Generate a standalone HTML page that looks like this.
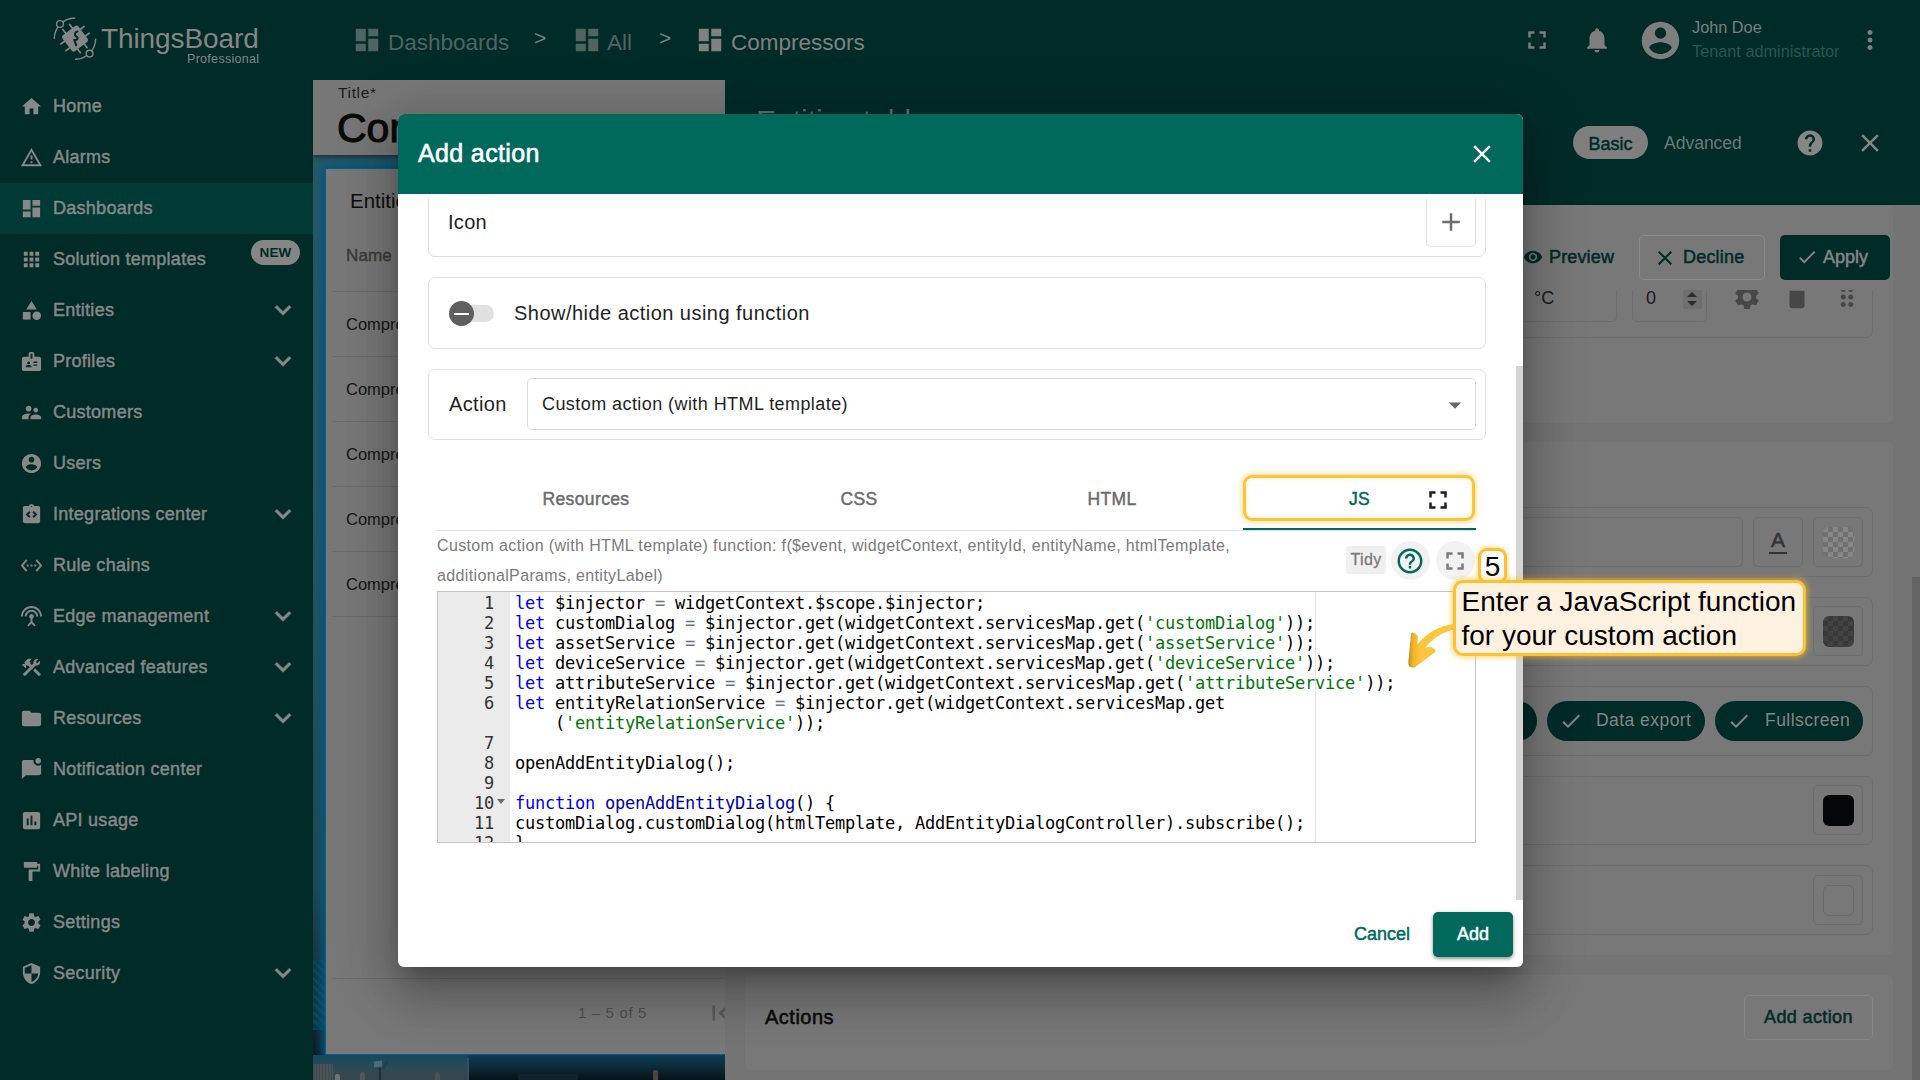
<!DOCTYPE html>
<html lang="en">
<head>
<meta charset="utf-8">
<title>ThingsBoard - Add action</title>
<style>
*{box-sizing:border-box;margin:0;padding:0}
html,body{width:1920px;height:1080px;overflow:hidden;background:#787878;font-family:"Liberation Sans",sans-serif;color:#111}
.abs{position:absolute}
svg{display:block}
/* ---------- sidebar ---------- */
#side{position:absolute;left:0;top:0;width:313px;height:1080px;background:#002b27}
#side .it{position:absolute;left:0;width:313px;height:51px}
#side .it.act{background:#003a35}
#side .it svg.ic{position:absolute;left:19.5px;top:13.5px;width:23px;height:23px;fill:#888888}
#side .it span{position:absolute;left:53px;top:15px;font-size:18px;color:#888888;-webkit-text-stroke:.45px #888888;letter-spacing:.27px;white-space:nowrap;line-height:20px}
#side .it svg.ch{position:absolute;left:267px;top:9px;width:32px;height:32px;fill:#888888;stroke:#888888;stroke-width:.5px}
#side .new{position:absolute;left:251px;top:6px;width:49px;height:25px;border-radius:13px;background:#868686;color:#002b27;font-size:13.5px;font-weight:bold;line-height:25px;text-align:center;letter-spacing:.2px}
/* ---------- topbar ---------- */
#top{position:absolute;left:313px;top:0;width:1607px;height:80px;background:#002b27}
#top .bc{position:absolute;top:30px;font-size:22.5px;color:#506461;line-height:26px;white-space:nowrap}
#top svg.bi{position:absolute;top:25px;width:30px;height:30px;fill:#506461}
#top .gt{position:absolute;top:25px;font-size:21px;color:#7a8280;line-height:26px}
/* ---------- left panel ---------- */
#left{position:absolute;left:313px;top:80px;width:412px;height:1000px;overflow:hidden;background:linear-gradient(180deg,#2b5866 0%,#2a5563 40%,#234650 80%,#16272e 93%,#0a1013 100%)}
#left .hd{position:absolute;left:0;top:0;width:412px;height:75px;background:#777;box-shadow:0 2px 5px rgba(0,0,0,.45)}
#left .wd{position:absolute;left:13px;top:89px;width:421px;height:885px;background:#787878;box-shadow:0 0 0 1px #0a5c86,0 0 9px 5px #04587f}
#left .row{position:absolute;left:19px;font-size:16.5px;color:#161616;line-height:20px}
#left .ln{position:absolute;left:5px;width:410px;height:1px;background:#6c6c6c}
/* ---------- right panel ---------- */
#right{position:absolute;left:725px;top:80px;width:1195px;height:1000px;background:#747474;overflow:hidden}
#right .hd{position:absolute;left:0;top:0;width:1195px;height:125px;background:#002b27}
#right .card{position:absolute;left:20px;width:1148px;background:#787878;border-radius:5px}
#right .box{position:absolute;border:1px solid #6e6e6e;border-radius:7px}
#right .sw{position:absolute;left:1088px;width:50px;height:50px;border:1px solid #6e6e6e;border-radius:5px}
#right .sw i{position:absolute;left:9px;top:9px;width:31px;height:31px;border-radius:6px}
/* ---------- dialog ---------- */
#dlg{position:absolute;left:398px;top:114px;width:1125px;height:853px;background:#fff;border-radius:6px;overflow:hidden}
#dlgsh{position:absolute;left:398px;top:114px;width:1125px;height:853px;border-radius:6px;box-shadow:0 14px 19px -8px rgba(0,0,0,.24),0 30px 48px 4px rgba(0,0,0,.17),0 11px 58px 10px rgba(0,0,0,.16)}
#dlg .hd{position:absolute;left:0;top:0;width:1125px;height:80px;background:#00695c}
#dlg .pn{position:absolute;left:30px;width:1058px;border:1px solid #e0e0e0;border-radius:7px}
#dlg .lb{position:absolute;font-size:19.5px;line-height:24px;color:#1f1f1f;white-space:nowrap}
#dlg .tab{position:absolute;top:375px;font-size:17.5px;line-height:20px;-webkit-text-stroke-width:.45px;color:#6b6b6b;letter-spacing:.37px;white-space:nowrap;transform:translateX(-50%)}
#ed{position:absolute;left:39px;top:477px;width:1039px;height:252px;border:1px solid #c4c4c4;overflow:hidden;background:#fff}
#ed .gut{position:absolute;left:0;top:0;width:72px;height:252px;background:#ebebeb}
#ed .pm{position:absolute;left:877px;top:0;width:1px;height:252px;background:#e3e3e3}
#ed pre{position:absolute;top:1px;font-family:"DejaVu Sans Mono","Liberation Mono",monospace;font-size:17px;letter-spacing:-.234px;line-height:20px;color:#000;white-space:pre}
#ed pre.num{left:0;width:56px;text-align:right;color:#333}
#ed pre.code{left:77px}
#ed .k{color:#0000f0}#ed .o{color:#687687}#ed .s{color:#03740a}#ed .f{color:#0000a2}
</style>
</head>
<body>
<!-- ================= SIDEBAR ================= -->
<div id="side">
  <div id="logo" class="abs" style="left:50px;top:14px;width:220px;height:56px">
    <svg class="abs" style="left:-10px;top:-6px" width="70" height="64" viewBox="0 0 70 64" fill="none" stroke="#868686" stroke-width="1.4" stroke-linecap="round">
      <path d="M14.3 30.6A20.7 20.7 0 0 1 34.6 10"/><path d="M55.6 31.2A20.7 20.7 0 0 1 35.6 51.3"/>
      <circle cx="20" cy="16" r="3.4" fill="#002b27"/><circle cx="49.6" cy="45.6" r="3.4" fill="#002b27"/>
      <g transform="translate(35 30.6) rotate(-37)">
        <g stroke-width="1.7"><path d="M-4.2 -14.5V14.5M4.2 -14.5V14.5M-14.5 -4.2H14.5M-14.5 4.2H14.5"/></g>
        <rect x="-10" y="-10" width="20" height="20" rx="2.8" fill="#868686" stroke="none"/>
      </g>
      <path d="M37.5 23.5c-3 .6-3.4 3.4-1.2 4.8 2.4 1.6 1 4.2-2.2 3.6m.3.2l1.8 5.2" stroke="#002b27" stroke-width="2"/>
    </svg>
    <div class="abs" style="left:51px;top:9px;font-size:28px;line-height:32px;color:#868686;letter-spacing:-.1px;white-space:nowrap">ThingsBoard</div>
    <div class="abs" style="left:137px;top:38px;font-size:12.5px;line-height:14px;color:#868686;letter-spacing:.3px;white-space:nowrap">Professional</div>
  </div>
  <div class="it" style="top:81px"><svg class="ic" viewBox="0 0 24 24"><path d="M10 20v-6h4v6h5v-8h3L12 3 2 12h3v8z"/></svg><span>Home</span></div>
  <div class="it" style="top:132px"><svg class="ic" viewBox="0 0 24 24"><path d="M12 5.99L19.53 19H4.47L12 5.99M12 2L1 21h22L12 2zm1 14h-2v2h2v-2zm0-6h-2v4h2v-4z"/></svg><span>Alarms</span></div>
  <div class="it act" style="top:183px"><svg class="ic" viewBox="0 0 24 24"><path d="M3 13h8V3H3v10zm0 8h8v-6H3v6zm10 0h8V11h-8v10zm0-18v6h8V3h-8z"/></svg><span>Dashboards</span></div>
  <div class="it" style="top:234px"><svg class="ic" viewBox="0 0 24 24"><path d="M4 8h4V4H4v4zm6 12h4v-4h-4v4zm-6 0h4v-4H4v4zm0-6h4v-4H4v4zm6 0h4v-4h-4v4zm6-10v4h4V4h-4zm-6 4h4V4h-4v4zm6 6h4v-4h-4v4zm0 6h4v-4h-4v4z"/></svg><span>Solution templates</span><b class="new">NEW</b></div>
  <div class="it" style="top:285px"><svg class="ic" viewBox="0 0 24 24"><path d="M12 2l-5.5 9h11z"/><circle cx="17.5" cy="17.5" r="4.5"/><path d="M3 13.5h8v8H3z"/></svg><span>Entities</span><svg class="ch" viewBox="0 0 24 24"><path d="M16.59 8.59L12 13.17 7.41 8.59 6 10l6 6 6-6z"/></svg></div>
  <div class="it" style="top:336px"><svg class="ic" viewBox="0 0 24 24"><path d="M20 7h-5V4c0-1.1-.9-2-2-2h-2c-1.1 0-2 .9-2 2v3H4c-1.1 0-2 .9-2 2v11c0 1.1.9 2 2 2h16c1.1 0 2-.9 2-2V9c0-1.1-.9-2-2-2zM9 12c.83 0 1.5.67 1.5 1.5S9.83 15 9 15s-1.5-.67-1.5-1.5S8.17 12 9 12zm3 6H6v-.75c0-1 2-1.5 3-1.5s3 .5 3 1.5V18zm1-9h-2V4h2v5zm5 7.5h-4V15h4v1.5zm0-3h-4V12h4v1.5z"/></svg><span>Profiles</span><svg class="ch" viewBox="0 0 24 24"><path d="M16.59 8.59L12 13.17 7.41 8.59 6 10l6 6 6-6z"/></svg></div>
  <div class="it" style="top:387px"><svg class="ic" viewBox="0 0 24 24"><path d="M16.5 12c1.38 0 2.49-1.12 2.49-2.5S17.88 7 16.5 7C15.12 7 14 8.12 14 9.5s1.12 2.5 2.5 2.5zM9 11c1.66 0 2.99-1.34 2.99-3S10.66 5 9 5C7.34 5 6 6.34 6 8s1.34 3 3 3zm7.5 3c-1.83 0-5.5.92-5.5 2.75V19h11v-2.25c0-1.83-3.67-2.75-5.5-2.75zM9 13c-2.33 0-7 1.17-7 3.5V19h7v-2.25c0-.85.33-2.34 2.37-3.47C10.5 13.1 9.66 13 9 13z"/></svg><span>Customers</span></div>
  <div class="it" style="top:438px"><svg class="ic" viewBox="0 0 24 24"><path d="M12 2C6.48 2 2 6.48 2 12s4.48 10 10 10 10-4.48 10-10S17.52 2 12 2zm0 3c1.66 0 3 1.34 3 3s-1.34 3-3 3-3-1.34-3-3 1.34-3 3-3zm0 14.2c-2.5 0-4.71-1.28-6-3.22.03-1.99 4-3.08 6-3.08 1.99 0 5.97 1.09 6 3.08-1.29 1.94-3.5 3.22-6 3.22z"/></svg><span>Users</span></div>
  <div class="it" style="top:489px"><svg class="ic" viewBox="0 0 24 24"><path d="M19 3h-4.18C14.4 1.84 13.3 1 12 1s-2.4.84-2.82 2H5c-.14 0-.27.01-.4.04-.39.08-.74.28-1.01.55-.18.18-.33.4-.43.64-.1.23-.16.49-.16.77v14c0 .27.06.54.16.78s.25.45.43.64c.27.27.62.47 1.01.55.13.02.26.03.4.03h14c1.1 0 2-.9 2-2V5c0-1.1-.9-2-2-2zm-8 11.17l-1.41 1.42L6 12l3.59-3.59L11 9.83 8.83 12 11 14.17zm1-9.92c-.41 0-.75-.34-.75-.75s.34-.75.75-.75.75.34.75.75-.34.75-.75.75zm2.41 11.34L13 14.17 15.17 12 13 9.83l1.41-1.42L18 12l-3.59 3.59z"/></svg><span>Integrations center</span><svg class="ch" viewBox="0 0 24 24"><path d="M16.59 8.59L12 13.17 7.41 8.59 6 10l6 6 6-6z"/></svg></div>
  <div class="it" style="top:540px"><svg class="ic" viewBox="0 0 24 24"><path d="M7.77 6.76L6.23 5.48.82 12l5.41 6.52 1.54-1.28L3.42 12l4.35-5.24zM7 13h2v-2H7v2zm10-2h-2v2h2v-2zm-6 2h2v-2h-2v2zm6.77-7.52l-1.54 1.28L20.58 12l-4.35 5.24 1.54 1.28L23.18 12l-5.41-6.52z"/></svg><span>Rule chains</span></div>
  <div class="it" style="top:591px"><svg class="ic" viewBox="0 0 24 24"><path d="M12 5c-3.87 0-7 3.13-7 7h2c0-2.76 2.24-5 5-5s5 2.24 5 5h2c0-3.87-3.13-7-7-7zm1 9.29c.88-.39 1.5-1.26 1.5-2.29 0-1.38-1.12-2.5-2.5-2.5S9.5 10.620 9.5 12c0 1.020.62 1.9 1.5 2.29v3.3L7.59 21 9 22.410l3-3 3 3L16.410 21 13 17.590v-3.3zM12 1C5.93 1 1 5.930 1 12h2c0-4.970 4.030-9 9-9s9 4.030 9 9h2c0-6.070-4.930-11-11-11z"/></svg><span>Edge management</span><svg class="ch" viewBox="0 0 24 24"><path d="M16.59 8.59L12 13.17 7.41 8.59 6 10l6 6 6-6z"/></svg></div>
  <div class="it" style="top:642px"><svg class="ic" viewBox="0 0 24 24"><path d="M13.783 15.172l2.121-2.121 5.996 5.996-2.121 2.121zM17.5 10c1.930 0 3.5-1.570 3.5-3.5 0-.580-.160-1.120-.410-1.600l-2.700 2.700-1.490-1.490 2.700-2.700c-.480-.250-1.020-.410-1.600-.410C15.570 3 14 4.570 14 6.500c0 .410.080.8.210 1.160l-1.850 1.850-1.780-1.780.710-.710-1.410-1.410L12 3.490c-1.170-1.170-3.070-1.170-4.240 0L4.220 7.030l1.410 1.410H2.810l-.710.710 3.540 3.540.710-.710V9.150l1.410 1.410.710-.710 1.780 1.780-7.410 7.410 2.120 2.120L16.340 9.790c.360.130.750.210 1.160.210z"/></svg><span>Advanced features</span><svg class="ch" viewBox="0 0 24 24"><path d="M16.59 8.59L12 13.17 7.41 8.59 6 10l6 6 6-6z"/></svg></div>
  <div class="it" style="top:693px"><svg class="ic" viewBox="0 0 24 24"><path d="M10 4H4c-1.1 0-1.99.9-1.99 2L2 18c0 1.1.9 2 2 2h16c1.1 0 2-.9 2-2V8c0-1.1-.9-2-2-2h-8l-2-2z"/></svg><span>Resources</span><svg class="ch" viewBox="0 0 24 24"><path d="M16.59 8.59L12 13.17 7.41 8.59 6 10l6 6 6-6z"/></svg></div>
  <div class="it" style="top:744px"><svg class="ic" viewBox="0 0 24 24"><path d="M22 6.98V16c0 1.1-.9 2-2 2H6l-4 4V4c0-1.1.9-2 2-2h10.1c-.06.32-.1.66-.1 1 0 2.76 2.24 5 5 5 1.13 0 2.16-.39 3-1.020zM16 3c0 1.660 1.340 3 3 3s3-1.340 3-3-1.340-3-3-3-3 1.340-3 3z"/></svg><span>Notification center</span></div>
  <div class="it" style="top:795px"><svg class="ic" viewBox="0 0 24 24"><path d="M19 3H5c-1.1 0-2 .9-2 2v14c0 1.1.9 2 2 2h14c1.1 0 2-.9 2-2V5c0-1.1-.9-2-2-2zM9 17H7v-7h2v7zm4 0h-2V7h2v10zm4 0h-2v-4h2v4z"/></svg><span>API usage</span></div>
  <div class="it" style="top:846px"><svg class="ic" viewBox="0 0 24 24"><path d="M18 4V3c0-.55-.45-1-1-1H5c-.55 0-1 .45-1 1v4c0 .55.45 1 1 1h12c.55 0 1-.45 1-1V6h1v4H9v11c0 .55.45 1 1 1h2c.55 0 1-.45 1-1v-9h8V4h-3z"/></svg><span>White labeling</span></div>
  <div class="it" style="top:897px"><svg class="ic" viewBox="0 0 24 24"><path d="M19.14 12.94c.04-.3.06-.61.06-.94 0-.32-.02-.64-.07-.94l2.03-1.58c.18-.14.23-.41.12-.61l-1.92-3.32c-.12-.22-.37-.29-.59-.22l-2.39.96c-.5-.38-1.03-.7-1.62-.94l-.36-2.54c-.04-.24-.24-.41-.48-.41h-3.84c-.24 0-.43.17-.47.41l-.36 2.54c-.59.24-1.13.57-1.62.94l-2.39-.96c-.22-.08-.47 0-.59.22L2.74 8.87c-.12.21-.08.47.12.61l2.03 1.58c-.05.3-.09.63-.09.94s.02.64.07.94l-2.03 1.58c-.18.14-.23.41-.12.61l1.920 3.32c.12.22.37.29.59.22l2.39-.96c.5.38 1.03.7 1.62.94l.36 2.54c.05.24.24.41.48.41h3.84c.24 0 .44-.17.47-.41l.36-2.54c.59-.24 1.13-.56 1.62-.94l2.39.96c.22.08.47 0 .59-.22l1.92-3.32c.12-.22.07-.47-.12-.61l-2.01-1.58zM12 15.6c-1.98 0-3.6-1.62-3.6-3.6s1.62-3.6 3.6-3.6 3.6 1.62 3.6 3.6-1.62 3.6-3.6 3.6z"/></svg><span>Settings</span></div>
  <div class="it" style="top:948px"><svg class="ic" viewBox="0 0 24 24"><path d="M12 1L3 5v6c0 5.55 3.84 10.74 9 12 5.16-1.26 9-6.45 9-12V5l-9-4zm0 10.99h7c-.53 4.12-3.28 7.79-7 8.940V12H5V6.3l7-3.110v8.8z"/></svg><span>Security</span><svg class="ch" viewBox="0 0 24 24"><path d="M16.59 8.59L12 13.17 7.41 8.59 6 10l6 6 6-6z"/></svg></div>
</div>
<!-- ================= TOPBAR ================= -->
<div id="top">
  <svg class="bi" style="left:39px" viewBox="0 0 24 24"><path d="M3 13h8V3H3v10zm0 8h8v-6H3v6zm10 0h8V11h-8v10zm0-18v6h8V3h-8z"/></svg><div class="bc" style="left:75px">Dashboards</div>
  <div class="gt" style="left:221px">&gt;</div>
  <svg class="bi" style="left:259px" viewBox="0 0 24 24"><path d="M3 13h8V3H3v10zm0 8h8v-6H3v6zm10 0h8V11h-8v10zm0-18v6h8V3h-8z"/></svg><div class="bc" style="left:294px">All</div>
  <div class="gt" style="left:346px">&gt;</div>
  <svg class="bi" style="left:382px;fill:#808080" viewBox="0 0 24 24"><path d="M3 13h8V3H3v10zm0 8h8v-6H3v6zm10 0h8V11h-8v10zm0-18v6h8V3h-8z"/></svg><div class="bc" style="left:418px;color:#808080">Compressors</div>
  <svg class="abs" style="left:1209px;top:25px;fill:#7e7e7e" width="30" height="30" viewBox="0 0 24 24"><path d="M7 14H5v5h5v-2H7v-3zm-2-4h2V7h3V5H5v5zm12 7h-3v2h5v-5h-2v3zM14 5v2h3v3h2V5h-5z"/></svg>
  <svg class="abs" style="left:1269px;top:25px;fill:#7e7e7e" width="30" height="30" viewBox="0 0 24 24"><path d="M12 22c1.1 0 2-.9 2-2h-4c0 1.1.89 2 2 2zm6-6v-5c0-3.07-1.64-5.64-4.5-6.32V4c0-.83-.67-1.5-1.5-1.5s-1.5.67-1.5 1.5v.68C7.63 5.36 6 7.92 6 11v5l-2 2v1h16v-1l-2-2z"/></svg>
  <svg class="abs" style="left:1324.5px;top:17.5px;fill:#7e7e7e" width="45" height="45" viewBox="0 0 24 24"><path d="M12 2C6.48 2 2 6.48 2 12s4.48 10 10 10 10-4.48 10-10S17.52 2 12 2zm0 3c1.66 0 3 1.34 3 3s-1.34 3-3 3-3-1.34-3-3 1.34-3 3-3zm0 14.2c-2.5 0-4.71-1.28-6-3.22.03-1.99 4-3.08 6-3.08 1.99 0 5.97 1.09 6 3.08-1.29 1.94-3.5 3.22-6 3.22z"/></svg>
  <div class="abs" style="left:1379px;top:17px;font-size:16.3px;line-height:20px;color:#7e7e7e;white-space:nowrap">John Doe</div>
  <div class="abs" style="left:1379px;top:41px;font-size:16.3px;line-height:20px;color:#2c554f;white-space:nowrap">Tenant administrator</div>
  <svg class="abs" style="left:1542px;top:25px;fill:#7e7e7e" width="30" height="30" viewBox="0 0 24 24"><path d="M12 8c1.1 0 2-.9 2-2s-.9-2-2-2-2 .9-2 2 .9 2 2 2zm0 2c-1.1 0-2 .9-2 2s.9 2 2 2 2-.9 2-2-.9-2-2-2zm0 6c-1.1 0-2 .9-2 2s.9 2 2 2 2-.9 2-2-.9-2-2-2z"/></svg>
</div>
<!-- ================= LEFT PANEL ================= -->
<div id="left">
  <div class="abs" style="left:0;top:0;z-index:2">
  <div class="abs" style="left:0;top:975px;width:155px;height:25px;background:linear-gradient(180deg,#14485c 0,#1d4a5a 25%,#2c4a54 55%,#3a4549 100%)"></div>
  <div class="abs" style="left:155px;top:975px;width:257px;height:25px;background:linear-gradient(180deg,#0d3d54 0,#0c2c3c 45%,#081217 100%)"></div>
  <div class="abs" style="left:154px;top:978px;width:2px;height:22px;background:#35505c"></div>
  <div class="abs" style="left:0;top:984px;width:20px;height:16px;background:repeating-linear-gradient(90deg,#3f474a 0 1px,#4b5356 1px 3px)"></div>
  <div class="abs" style="left:22px;top:994px;width:5px;height:6px;border-radius:2px 2px 0 0;background:#6e7274"></div>
  <div class="abs" style="left:47px;top:992px;width:5px;height:8px;border-radius:2px 2px 0 0;background:#50565a"></div>
  <div class="abs" style="left:61px;top:981px;width:8px;height:6px;background:#4d6a78;transform:skewY(-8deg)"></div>
  <div class="abs" style="left:71px;top:981px;width:2px;height:9px;background:#2a3a44;transform:rotate(28deg)"></div>
  <div class="abs" style="left:66px;top:988px;width:2px;height:12px;background:#1f2c33"></div>
  <div class="abs" style="left:122px;top:992px;width:5px;height:8px;border-radius:2px 2px 0 0;background:#4b5256"></div>
  <div class="abs" style="left:340px;top:990px;width:5px;height:10px;border-radius:2px 2px 0 0;background:#4d4342"></div>
  <div class="abs" style="left:205px;top:994px;width:60px;height:6px;background:#12232c"></div>
  </div>
  <div class="abs" style="left:0;top:880px;width:14px;height:70px;background:repeating-linear-gradient(45deg,#16414f 0 2px,#0d3546 2px 6px)"></div>
  <div class="wd"><div class="abs" style="left:1px;top:-1px;width:100%;height:100%">
    <div class="abs" style="left:23px;top:21px;font-size:20.5px;line-height:24px;color:#0d0d0d;white-space:nowrap">Entities table</div>
    <div class="row" style="top:78px;color:#3d3b36;-webkit-text-stroke-width:.45px;font-size:17px;letter-spacing:.15px">Name</div>
    <div class="ln" style="top:123px"></div>
    <div class="row" style="top:146px">Compressor A</div><div class="ln" style="top:188px"></div>
    <div class="row" style="top:211px">Compressor B</div><div class="ln" style="top:253px"></div>
    <div class="row" style="top:276px">Compressor C</div><div class="ln" style="top:318px"></div>
    <div class="row" style="top:341px">Compressor D</div><div class="ln" style="top:383px"></div>
    <div class="row" style="top:406px">Compressor E</div><div class="ln" style="top:448px"></div>
    <div class="ln" style="top:810px"></div>
    <div class="abs" style="left:251px;top:836px;font-size:15px;line-height:18px;color:#4f4f4f;white-space:nowrap;letter-spacing:.65px">1 – 5 of 5</div>
    <svg class="abs" style="left:378px;top:830px;fill:#5a5a5a" width="30" height="30" viewBox="0 0 24 24"><path d="M18.41 16.59L13.82 12l4.59-4.59L17 6l-6 6 6 6zM6 6h2v12H6z"/></svg>
  </div></div>
  <div class="hd">
    <div class="abs" style="left:25px;top:5px;font-size:15.5px;line-height:16px;color:#1c1c1c;letter-spacing:.65px">Title*</div>
    <div class="abs" style="left:24px;top:25px;font-size:41px;line-height:46px;-webkit-text-stroke-width:1.1px;color:#0a0a0a;white-space:nowrap">Compressors</div>
  </div>
</div>
<!-- ================= RIGHT PANEL ================= -->
<div id="right">
  <!-- cards -->
  <div class="card" style="top:125px;height:218px"></div>
  <div class="card" style="top:362px;height:513px"></div>
  <div class="card" style="top:895px;height:95px"></div>
  <!-- row: units / decimals -->
  <div class="box" style="left:-40px;top:170px;width:1188px;height:88px;border-top-color:transparent"></div>
  <div class="box" style="left:600px;top:190px;width:292px;height:52px;border-radius:5px"></div>
  <div class="abs" style="left:809px;top:208px;font-size:18px;line-height:20px;color:#1a1a1a">°C</div>
  <div class="box" style="left:907px;top:190px;width:75px;height:52px;border-radius:5px"></div>
  <div class="abs" style="left:921px;top:208px;font-size:18px;line-height:20px;color:#1a1a1a">0</div>
  <div class="abs" style="left:958px;top:209px;width:19px;height:20px;background:#6f6f6f"></div>
  <svg class="abs" style="left:960px;top:210px;fill:#2b2b2b" width="14" height="18" viewBox="0 0 14 18"><path d="M2 7l5-5 5 5zM2 11l5 5 5-5z"/></svg>
  <svg class="abs" style="left:1007px;top:202px;fill:#474747" width="30" height="30" viewBox="0 0 24 24"><path d="M19.14 12.94c.04-.3.06-.61.06-.94 0-.32-.02-.64-.07-.94l2.03-1.58c.18-.14.23-.41.12-.61l-1.92-3.32c-.12-.22-.37-.29-.59-.22l-2.39.96c-.5-.38-1.03-.7-1.62-.94l-.36-2.54c-.04-.24-.24-.41-.48-.41h-3.84c-.24 0-.43.17-.47.41l-.36 2.54c-.59.24-1.13.57-1.62.94l-2.39-.96c-.22-.08-.47 0-.59.22L2.74 8.87c-.12.21-.08.47.12.61l2.03 1.58c-.05.3-.09.63-.09.94s.02.64.07.94l-2.03 1.58c-.18.14-.23.41-.12.61l1.92 3.32c.12.22.37.29.59.22l2.39-.96c.5.38 1.03.7 1.62.94l.36 2.54c.05.24.24.41.48.41h3.84c.24 0 .44-.17.47-.41l.36-2.54c.59-.24 1.13-.56 1.62-.94l2.39.96c.22.08.47 0 .59-.22l1.92-3.32c.12-.22.07-.47-.12-.61l-2.01-1.58zM12 15.6c-1.98 0-3.6-1.62-3.6-3.6s1.62-3.6 3.6-3.6 3.6 1.62 3.6 3.6-1.62 3.6-3.6 3.6z"/></svg>
  <svg class="abs" style="left:1057px;top:202px;fill:#474747" width="30" height="30" viewBox="0 0 24 24"><path d="M6 19c0 1.1.9 2 2 2h8c1.1 0 2-.9 2-2V7H6v12zM19 4h-3.5l-1-1h-5l-1 1H5v2h14V4z"/></svg>
  <svg class="abs" style="left:1107px;top:202px;fill:#474747" width="30" height="30" viewBox="0 0 24 24"><path d="M11 18c0 1.1-.9 2-2 2s-2-.9-2-2 .9-2 2-2 2 .9 2 2zm-2-8c-1.1 0-2 .9-2 2s.9 2 2 2 2-.9 2-2-.9-2-2-2zm0-6c-1.1 0-2 .9-2 2s.9 2 2 2 2-.9 2-2-.9-2-2-2zm6 4c1.1 0 2-.9 2-2s-.9-2-2-2-2 .9-2 2 .9 2 2 2zm0 2c-1.1 0-2 .9-2 2s.9 2 2 2 2-.9 2-2-.9-2-2-2zm0 6c-1.1 0-2 .9-2 2s.9 2 2 2 2-.9 2-2-.9-2-2-2z"/></svg>
  <!-- sticky button strip (covers clipped row tops) -->
  <div class="abs" style="left:20px;top:125px;width:1148px;height:85px;background:#787878;border-radius:5px 5px 0 0"></div>
  <svg class="abs" style="left:797.5px;top:167px;fill:#002b27" width="20" height="20" viewBox="0 0 24 24"><path d="M12 4.5C7 4.5 2.73 7.61 1 12c1.73 4.39 6 7.5 11 7.5s9.27-3.11 11-7.5c-1.73-4.39-6-7.5-11-7.5zM12 17c-2.76 0-5-2.24-5-5s2.24-5 5-5 5 2.24 5 5-2.24 5-5 5zm0-8c-1.66 0-3 1.34-3 3s1.34 3 3 3 3-1.34 3-3-1.34-3-3-3z"/></svg>
  <div class="abs" style="left:824px;top:166px;font-size:18px;line-height:22px;-webkit-text-stroke-width:.5px;letter-spacing:.15px;color:#002b27">Preview</div>
  <div class="box" style="left:914px;top:155px;width:126px;height:45px;border-radius:5px;border-color:#8a8a8a"></div>
  <svg class="abs" style="left:928px;top:165.5px;fill:#002b27" width="24" height="24" viewBox="0 0 24 24"><path d="M19 6.41L17.59 5 12 10.59 6.410 5 5 6.410 10.590 12 5 17.590 6.410 19 12 13.410 17.590 19 19 17.590 13.410 12z"/></svg>
  <div class="abs" style="left:958px;top:166px;font-size:18px;line-height:22px;-webkit-text-stroke-width:.5px;letter-spacing:.2px;color:#002b27">Decline</div>
  <div class="abs" style="left:1055px;top:155px;width:110px;height:45px;border-radius:5px;background:#002b27"></div>
  <svg class="abs" style="left:1071px;top:166px;fill:#868686" width="22" height="22" viewBox="0 0 24 24"><path d="M9 16.17L4.83 12l-1.42 1.41L9 19 21 7l-1.41-1.41z"/></svg>
  <div class="abs" style="left:1098px;top:166px;font-size:18px;line-height:22px;-webkit-text-stroke-width:.5px;color:#868686">Apply</div>
  <!-- card 2 rows -->
  <div class="box" style="left:-40px;top:427px;width:1188px;height:70px"></div>
  <div class="box" style="left:300px;top:437px;width:718px;height:50px;border-radius:5px"></div>
  <div class="box" style="left:1028px;top:437px;width:50px;height:50px;border-radius:5px"></div>
  <div class="abs" style="left:1028px;top:447px;width:50px;text-align:center;font-size:21px;line-height:26px;color:#333;-webkit-text-stroke:.5px #333">A</div>
  <div class="abs" style="left:1044px;top:472px;width:18px;height:2px;background:#333"></div>
  <div class="sw" style="top:437px"><i style="background:repeating-conic-gradient(#707070 0% 25%,#868686 0% 50%) 0 0/10px 10px"></i></div>
  <div class="box" style="left:-40px;top:517px;width:1188px;height:69px"></div>
  <div class="sw" style="top:526px"><i style="background:repeating-conic-gradient(#383838 0% 25%,#424242 0% 50%) 0 0/10px 10px"></i></div>
  <div class="box" style="left:-40px;top:606px;width:1188px;height:70px"></div>
  <div class="abs" style="left:700px;top:621px;width:112px;height:40px;border-radius:20px;background:#002b27"></div>
  <div class="abs" style="left:822px;top:621px;width:158px;height:40px;border-radius:20px;background:#002b27"></div>
  <svg class="abs" style="left:834px;top:629px;fill:#868686" width="24" height="24" viewBox="0 0 24 24"><path d="M9 16.17L4.83 12l-1.42 1.41L9 19 21 7l-1.41-1.41z"/></svg>
  <div class="abs" style="left:871px;top:629px;font-size:17.5px;line-height:22px;color:#868686;white-space:nowrap;letter-spacing:.45px">Data export</div>
  <div class="abs" style="left:990px;top:621px;width:148px;height:40px;border-radius:20px;background:#002b27"></div>
  <svg class="abs" style="left:1002px;top:629px;fill:#868686" width="24" height="24" viewBox="0 0 24 24"><path d="M9 16.17L4.83 12l-1.42 1.41L9 19 21 7l-1.41-1.41z"/></svg>
  <div class="abs" style="left:1040px;top:629px;font-size:17.5px;line-height:22px;color:#868686;white-space:nowrap;letter-spacing:.45px">Fullscreen</div>
  <div class="box" style="left:-40px;top:696px;width:1188px;height:69px"></div>
  <div class="sw" style="top:705px"><i style="background:#050607"></i></div>
  <div class="box" style="left:-40px;top:785px;width:1188px;height:70px"></div>
  <div class="sw" style="top:795px"><i style="background:#787878;border:1px solid #6a6a6a"></i></div>
  <!-- actions -->
  <div class="abs" style="left:40px;top:925px;font-size:20px;line-height:24px;-webkit-text-stroke-width:.55px;letter-spacing:.5px;color:#0b0b0b">Actions</div>
  <div class="box" style="left:1019px;top:915px;width:129px;height:45px;border-radius:5px;border-color:#858585"></div>
  <div class="abs" style="left:1019px;top:926px;width:129px;text-align:center;font-size:18px;line-height:22px;-webkit-text-stroke-width:.5px;letter-spacing:.37px;color:#002b27">Add action</div>
  <!-- scrollbar -->
  <div class="abs" style="left:1187px;top:497px;width:8px;height:503px;background:#646464"></div>
  <!-- header -->
  <div class="hd">
    <div class="abs" style="left:31px;top:23px;font-size:30px;line-height:36px;color:#5f6d6b;white-space:nowrap">Entities table</div>
    <div class="abs" style="left:848px;top:46px;width:75px;height:33px;border-radius:17px;background:#7f7f7f;color:#002b27;font-size:18px;-webkit-text-stroke-width:.5px;line-height:36px;text-align:center">Basic</div>
    <div class="abs" style="left:939px;top:52px;font-size:17.5px;line-height:22px;color:#6b7b79">Advanced</div>
    <svg class="abs" style="left:1070px;top:48px;fill:#868686" width="30" height="30" viewBox="0 0 24 24"><path d="M12 2C6.48 2 2 6.48 2 12s4.48 10 10 10 10-4.48 10-10S17.52 2 12 2zm1 17h-2v-2h2v2zm2.07-7.75l-.9.92C13.45 12.9 13 13.5 13 15h-2v-.5c0-1.1.45-2.1 1.17-2.83l1.24-1.26c.37-.36.59-.86.59-1.41 0-1.1-.9-2-2-2s-2 .9-2 2H8c0-2.21 1.79-4 4-4s4 1.79 4 4c0 .88-.36 1.68-.93 2.25z"/></svg>
    <svg class="abs" style="left:1130px;top:48px;fill:#868686" width="30" height="30" viewBox="0 0 24 24"><path d="M19 6.41L17.59 5 12 10.59 6.41 5 5 6.41 10.59 12 5 17.59 6.41 19 12 13.41 17.59 19 19 17.59 13.41 12z"/></svg>
  </div>
</div>
<!-- ================= DIALOG ================= -->
<div id="dlgsh"></div>
<div id="dlg">
  <!-- icon panel (clipped under header) -->
  <div class="pn" style="top:62px;height:81px"></div>
  <div class="lb" style="left:50px;top:96px;font-size:20px;letter-spacing:.3px">Icon</div>
  <div class="abs" style="left:1028px;top:74px;width:50px;height:59px;border:1px solid #e0e0e0;border-radius:5px"></div>
  <svg class="abs" style="left:1038px;top:93px;fill:#6e6e6e" width="30" height="30" viewBox="0 0 24 24"><path d="M19 13h-6v6h-2v-6H5v-2h6V5h2v6h6v2z"/></svg>
  <div class="abs" style="left:0;top:80px;width:1118px;height:5px;background:#fff"></div>
  <!-- show/hide panel -->
  <div class="pn" style="top:163px;height:72px"></div>
  <div class="abs" style="left:52px;top:191px;width:44px;height:17px;border-radius:9px;background:#e0e0e0"></div>
  <div class="abs" style="left:51px;top:187px;width:25px;height:25px;border-radius:50%;background:#5f5f5f"></div>
  <div class="abs" style="left:56px;top:198.5px;width:15px;height:2px;background:#fff"></div>
  <div class="lb" style="left:116px;top:187px;font-size:20px;letter-spacing:.47px">Show/hide action using function</div>
  <!-- action panel -->
  <div class="pn" style="top:255px;height:71px"></div>
  <div class="lb" style="left:51px;top:278px;font-size:20px;letter-spacing:.35px">Action</div>
  <div class="abs" style="left:129px;top:264px;width:949px;height:52px;border:1px solid #dcdcdc;border-radius:5px"></div>
  <div class="abs" style="left:144px;top:279px;font-size:18px;line-height:22px;color:#1f1f1f;white-space:nowrap;letter-spacing:.43px">Custom action (with HTML template)</div>
  <svg class="abs" style="left:1042px;top:276px;fill:#666" width="30" height="30" viewBox="0 0 24 24"><path d="M7 10l5 5 5-5z"/></svg>
  <!-- tabs -->
  <div class="tab" style="left:188px">Resources</div>
  <div class="tab" style="left:461px">CSS</div>
  <div class="tab" style="left:714px">HTML</div>
  <div class="tab" style="left:961.5px;color:#00695c">JS</div>
  <svg class="abs" style="left:1025px;top:371px;fill:#1c1c1c" width="30" height="30" viewBox="0 0 24 24"><path d="M7 14H5v5h5v-2H7v-3zm-2-4h2V7h3V5H5v5zm12 7h-3v2h5v-5h-2v3zM14 5v2h3v3h2V5h-5z"/></svg>
  <div class="abs" style="left:39px;top:416px;width:1039px;height:1px;background:#e0e0e0"></div>
  <div class="abs" style="left:845px;top:413.5px;width:233px;height:2.5px;background:#00695c"></div>
  <div class="abs" style="left:845px;top:361px;width:232px;height:45.5px;border:3px solid #fcc43a;border-radius:9px;box-shadow:0 0 6px 1px rgba(251,193,47,.55),inset 0 0 4px rgba(251,193,47,.35)"></div>
  <!-- description -->
  <div class="abs" style="left:39px;top:417px;width:800px;font-size:16px;line-height:30px;color:#7a7a7a;white-space:nowrap;letter-spacing:.36px">Custom action (with HTML template) function: f($event, widgetContext, entityId, entityName, htmlTemplate,<br>additionalParams, entityLabel)</div>
  <div class="abs" style="left:948px;top:432px;width:40px;height:28px;border-radius:4px;background:#f0f0f0;color:#7a7a7a;font-size:16px;-webkit-text-stroke-width:.3px;line-height:28px;text-align:center;letter-spacing:.4px">Tidy</div>
  <div class="abs" style="left:993px;top:427px;width:39px;height:39px;border-radius:50%;background:#f2f2f2"></div>
  <svg class="abs" style="left:997px;top:432px;fill:#00695c" width="30" height="30" viewBox="0 0 24 24"><path d="M11 18h2v-2h-2v2zm1-16C6.48 2 2 6.48 2 12s4.48 10 10 10 10-4.48 10-10S17.52 2 12 2zm0 18c-4.41 0-8-3.59-8-8s3.59-8 8-8 8 3.59 8 8-3.59 8-8 8zm0-14c-2.21 0-4 1.79-4 4h2c0-1.1.9-2 2-2s2 .9 2 2c0 2-3 1.75-3 5h2c0-2.25 3-2.5 3-5 0-2.21-1.79-4-4-4z"/></svg>
  <div class="abs" style="left:1038px;top:427px;width:39px;height:39px;border-radius:50%;background:#f2f2f2"></div>
  <svg class="abs" style="left:1042px;top:432px;fill:#7a7a7a" width="30" height="30" viewBox="0 0 24 24"><path d="M7 14H5v5h5v-2H7v-3zm-2-4h2V7h3V5H5v5zm12 7h-3v2h5v-5h-2v3zM14 5v2h3v3h2V5h-5z"/></svg>
  <!-- editor -->
  <div id="ed">
    <div class="gut"></div><div class="pm"></div>
<pre class="num">1
2
3
4
5
6

7
8
9
10
11
12</pre>
    <svg class="abs" style="left:59px;top:207px;fill:#6a6a6a" width="8" height="5" viewBox="0 0 8 5"><path d="M0 0h8L4 5z"/></svg>
<pre class="code"><span class="k">let</span> $injector <span class="o">=</span> widgetContext.$scope.$injector;
<span class="k">let</span> customDialog <span class="o">=</span> $injector.get(widgetContext.servicesMap.get(<span class="s">'customDialog'</span>));
<span class="k">let</span> assetService <span class="o">=</span> $injector.get(widgetContext.servicesMap.get(<span class="s">'assetService'</span>));
<span class="k">let</span> deviceService <span class="o">=</span> $injector.get(widgetContext.servicesMap.get(<span class="s">'deviceService'</span>));
<span class="k">let</span> attributeService <span class="o">=</span> $injector.get(widgetContext.servicesMap.get(<span class="s">'attributeService'</span>));
<span class="k">let</span> entityRelationService <span class="o">=</span> $injector.get(widgetContext.servicesMap.get
    (<span class="s">'entityRelationService'</span>));

openAddEntityDialog();

<span class="k">function</span> <span class="f">openAddEntityDialog</span>() {
customDialog.customDialog(htmlTemplate, AddEntityDialogController).subscribe();
}</pre>
  </div>
  <!-- dialog scrollbar -->
  <div class="abs" style="left:1118px;top:252px;width:7px;height:534px;background:#d4d4d4"></div>
  <!-- buttons -->
  <div class="abs" style="left:956px;top:809px;font-size:18px;line-height:22px;-webkit-text-stroke-width:.5px;color:#00695c">Cancel</div>
  <div class="abs" style="left:1035px;top:798px;width:80px;height:45px;border-radius:5px;background:#00695c;color:#fff;font-size:18px;-webkit-text-stroke-width:.5px;line-height:44px;text-align:center;box-shadow:0 2px 3px rgba(0,0,0,.3),0 1px 6px rgba(0,0,0,.18)">Add</div>
  <!-- header -->
  <div class="hd">
    <div class="abs" style="left:20px;top:24px;font-size:25px;line-height:30px;-webkit-text-stroke-width:.6px;color:#fff;letter-spacing:.36px;white-space:nowrap">Add action</div>
    <svg class="abs" style="left:1069px;top:25px;fill:#fff" width="30" height="30" viewBox="0 0 24 24"><path d="M19 6.41L17.59 5 12 10.59 6.41 5 5 6.41 10.59 12 5 17.59 6.41 19 12 13.41 17.59 19 19 17.59 13.41 12z"/></svg>
  </div>
</div>
<!-- ================= CALLOUT ================= -->
<div id="tip">
  <svg class="abs" style="left:1390px;top:600px" width="90" height="80" viewBox="0 0 90 80">
    <defs><linearGradient id="ag" x1="0" y1="0" x2="1" y2="0"><stop offset="0" stop-color="#c98f17"/><stop offset=".12" stop-color="#f2b82c"/><stop offset=".3" stop-color="#fcc63c"/><stop offset="1" stop-color="#fcc63c"/></linearGradient></defs>
    <path d="M64 24.1C50 26 36 33 27.6 44.5L27.8 37Q27.5 33.6 22.6 32.5Q21 32.3 21 34L18.3 62Q18 68.6 24.6 67.4L45 52.3Q46.6 51 45 49.4Q42 46.4 39.5 46.8L35.3 47.8C41 40 51 32.6 64 29.3Z" fill="url(#ag)"/>
  </svg>
  <div class="abs" style="left:1478px;top:548px;width:29px;height:36px;border:3px solid #fbc12f;border-radius:9px;background:#fff;box-shadow:0 0 5px rgba(251,193,47,.8);font-size:28px;line-height:31px;text-align:center;color:#000">5</div>
  <div class="abs" style="left:1453px;top:580px;width:353px;height:76px;border:3px solid #fbc12f;border-radius:10px;background:#fff1df;box-shadow:0 0 6px 1px rgba(251,193,47,.7);padding:2px 0 0 5.5px;font-size:28px;line-height:34px;color:#000;white-space:nowrap">Enter a JavaScript function<br>for your custom action</div>
</div>
</body>
</html>
